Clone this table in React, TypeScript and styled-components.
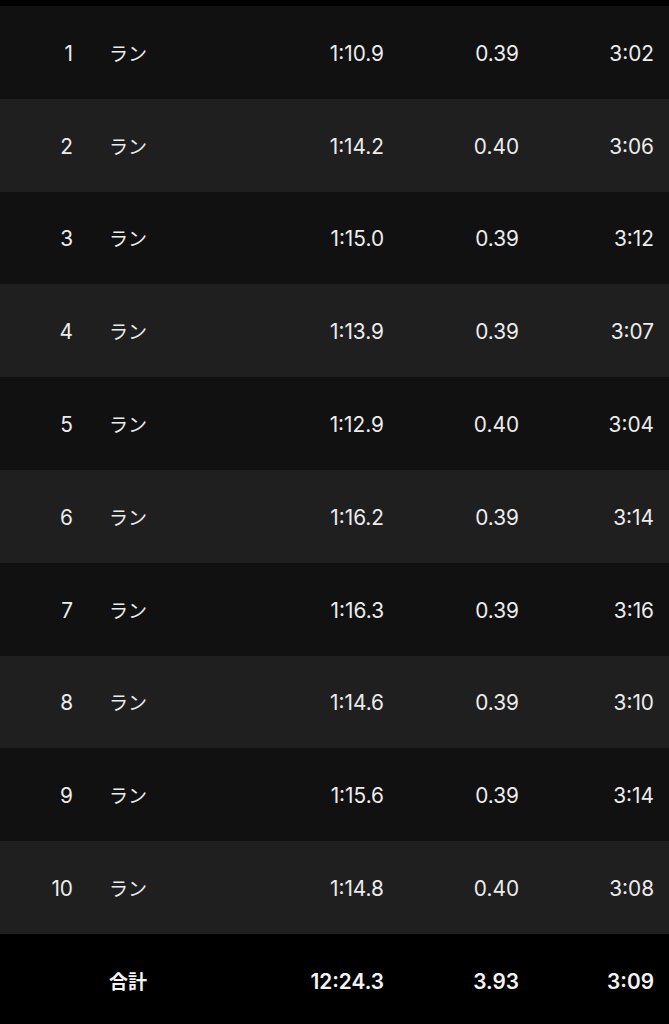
import React from "react";
import styled, { createGlobalStyle, css } from "styled-components";

const GlobalStyle = createGlobalStyle`
  html, body {
    margin: 0;
    padding: 0;
    background: #000000;
  }
  body {
    font-family: Inter, "Noto Sans CJK JP", sans-serif;
    -webkit-font-smoothing: antialiased;
  }
`;

const Table = styled.div`
  width: 669px;
  padding-top: 6px;
  background: #000000;
`;

const Row = styled.div<{ alt?: boolean; total?: boolean }>`
  display: grid;
  grid-template-columns: 73px 1fr 135px 135px 135px;
  align-items: center;
  box-sizing: border-box;
  height: 92.8px;
  padding: 3px 15px 0 0;
  background: ${(props) => (props.alt ? "#1f1f1f" : "#111111")};
  color: #ececec;
  font-size: 20.8px;
  line-height: 24px;
  ${(props) =>
    props.total &&
    css`
      height: 90px;
      padding-top: 6px;
      background: #000000;
      color: #f4f4f4;
      font-weight: 600;
    `}
`;

const Num = styled.div`
  text-align: right;
`;

const Label = styled.div`
  padding-left: 36px;
  font-family: "Noto Sans CJK JP", sans-serif;
  font-size: 19px;
  margin-top: -2px;
`;

const Value = styled.div`
  text-align: right;
`;

interface Lap {
  no: number;
  time: string;
  dist: string;
  pace: string;
}

const laps: Lap[] = [
  { no: 1, time: "1:10.9", dist: "0.39", pace: "3:02" },
  { no: 2, time: "1:14.2", dist: "0.40", pace: "3:06" },
  { no: 3, time: "1:15.0", dist: "0.39", pace: "3:12" },
  { no: 4, time: "1:13.9", dist: "0.39", pace: "3:07" },
  { no: 5, time: "1:12.9", dist: "0.40", pace: "3:04" },
  { no: 6, time: "1:16.2", dist: "0.39", pace: "3:14" },
  { no: 7, time: "1:16.3", dist: "0.39", pace: "3:16" },
  { no: 8, time: "1:14.6", dist: "0.39", pace: "3:10" },
  { no: 9, time: "1:15.6", dist: "0.39", pace: "3:14" },
  { no: 10, time: "1:14.8", dist: "0.40", pace: "3:08" },
];

const App = () => {
  return (
    <>
      <GlobalStyle />
      <Table>
        {laps.map((lap, i) => (
          <Row key={lap.no} alt={i % 2 === 1}>
            <Num>{lap.no}</Num>
            <Label>ラン</Label>
            <Value>{lap.time}</Value>
            <Value>{lap.dist}</Value>
            <Value>{lap.pace}</Value>
          </Row>
        ))}
        <Row total>
          <Num />
          <Label>合計</Label>
          <Value>12:24.3</Value>
          <Value>3.93</Value>
          <Value>3:09</Value>
        </Row>
      </Table>
    </>
  );
};

export default App;
